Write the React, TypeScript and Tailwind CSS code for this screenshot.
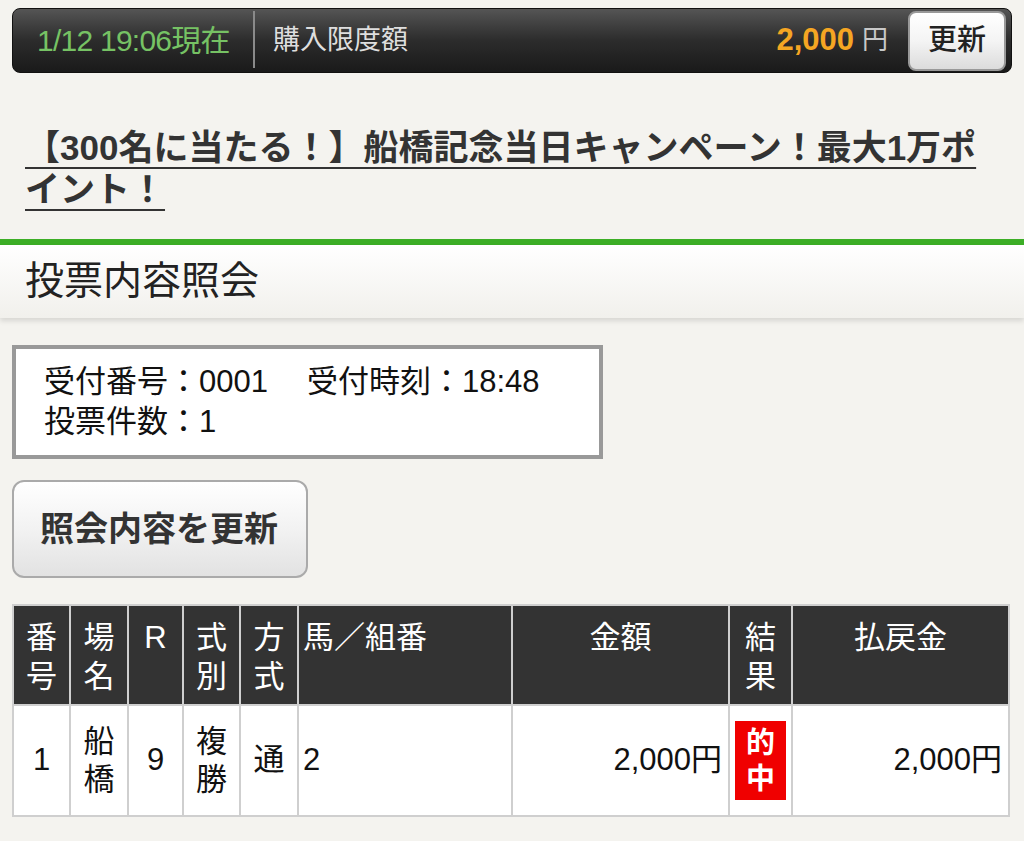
const font = "font-['Liberation_Sans','Noto_Sans_CJK_JP',sans-serif]";

const headCells: { label: string[]; align: string }[] = [
  { label: ['番', '号'], align: 'text-center' },
  { label: ['場', '名'], align: 'text-center' },
  { label: ['R'], align: 'text-center' },
  { label: ['式', '別'], align: 'text-center' },
  { label: ['方', '式'], align: 'text-center' },
  { label: ['馬／組番'], align: 'text-left' },
  { label: ['金額'], align: 'text-center' },
  { label: ['結', '果'], align: 'text-center' },
  { label: ['払戻金'], align: 'text-center' },
];

const colWidths = ['w-[57px]', 'w-[58px]', 'w-[55px]', 'w-[57px]', 'w-[58px]', 'w-[214px]', 'w-[217px]', 'w-[63px]', 'w-[217px]'];

const App = () => {
  return (
    <div className={`min-h-[841px] w-full bg-[#f4f3ef] ${font} pt-2 pb-6`}>
      {/* TOP BAR */}
      <div className="mx-3 h-[65px] flex items-center rounded-lg border border-[#111] bg-gradient-to-b from-[#555555] via-[#2c2c2c] to-[#1a1a1a]">
        <span className="pl-6 w-[240px] text-[30px] text-[#76c264] tracking-tight whitespace-nowrap">1/12 19:06現在</span>
        <div className="w-[2px] self-stretch mt-[2px] mb-[4px] bg-[#8a8a8a]" />
        <span className="ml-[18px] text-[27px] text-[#dedede]">購入限度額</span>
        <div className="flex-1" />
        <span className="text-[31px] font-bold text-[#f5a623]">2,000</span>
        <span className="ml-2 text-[26px] text-[#c8c8c8]">円</span>
        <button className="ml-5 mr-[5px] w-[98px] h-[60px] rounded-lg border-2 border-[#999] bg-gradient-to-b from-white via-[#f4f4f4] to-[#dcdcdc] text-[29px] font-medium text-[#222]">
          更新
        </button>
      </div>

      {/* CAMPAIGN LINK */}
      <div className="pl-[25px] pr-[30px] pt-[54px] pb-[28px]">
        <a className="text-[35px] leading-[42px] font-bold text-[#333] underline underline-offset-[7px] decoration-2">
          【300名に当たる！】船橋記念当日キャンペーン！最大1万ポイント！
        </a>
      </div>

      {/* PAGE TITLE */}
      <div className="border-t-[6px] border-[#3cae26]">
        <div className="h-[73px] flex items-center pl-[25px] bg-gradient-to-b from-white to-[#f1f0ec] shadow-[0_3px_5px_rgba(0,0,0,0.12)]">
          <h1 className="text-[39px] text-[#222]">投票内容照会</h1>
        </div>
      </div>

      {/* RECEIPT INFO */}
      <div className="mx-3 mt-[27px] w-[591px] border-4 border-[#999] bg-white pl-7 py-[13px] text-[31px] leading-[40px] text-[#111]">
        <div>
          受付番号：0001<span className="ml-[39px]">受付時刻：18:48</span>
        </div>
        <div>投票件数：1</div>
      </div>

      {/* REFRESH BUTTON */}
      <button className="mx-3 mt-[21px] w-[296px] h-[98px] rounded-xl border-2 border-[#aaa] bg-gradient-to-b from-white via-[#f2f2f2] to-[#e2e2e2] text-left pl-[26px] text-[34px] font-bold text-[#333]">
        照会内容を更新
      </button>

      {/* BET TABLE */}
      <table className="ml-3 mt-[26px] table-fixed border-collapse border-2 border-[#cfcfcf] text-[31px]">
        <colgroup>
          {colWidths.map((w, i) => (
            <col key={i} className={w} />
          ))}
        </colgroup>
        <thead>
          <tr className="h-[100px]">
            {headCells.map((c, i) => (
              <th
                key={i}
                className={`align-top bg-[#333] border-2 border-[#cfcfcf] text-white font-normal leading-[39px] pt-[12px] px-[4px] ${c.align}`}
              >
                {c.label.map((l, j) => (
                  <div key={j}>{l}</div>
                ))}
              </th>
            ))}
          </tr>
        </thead>
        <tbody className="bg-white text-[#111]">
          <tr className="h-[111px]">
            <td className="border-2 border-[#cfcfcf] text-center">1</td>
            <td className="border-2 border-[#cfcfcf] text-center leading-[38px]">
              <div>船</div>
              <div>橋</div>
            </td>
            <td className="border-2 border-[#cfcfcf] text-center">9</td>
            <td className="border-2 border-[#cfcfcf] text-center leading-[38px]">
              <div>複</div>
              <div>勝</div>
            </td>
            <td className="border-2 border-[#cfcfcf] text-center">通</td>
            <td className="border-2 border-[#cfcfcf] text-left px-[4px]">2</td>
            <td className="border-2 border-[#cfcfcf] text-right pr-[6px]">2,000円</td>
            <td className="border-2 border-[#cfcfcf] px-[4px]">
              <div className="mx-auto w-[51px] h-[79px] bg-[#f00000] flex flex-col items-center justify-center text-white font-bold text-[29px] leading-[36px]">
                <span>的</span>
                <span>中</span>
              </div>
            </td>
            <td className="border-2 border-[#cfcfcf] text-right pr-[6px]">2,000円</td>
          </tr>
        </tbody>
      </table>
    </div>
  );
};

export default App;
